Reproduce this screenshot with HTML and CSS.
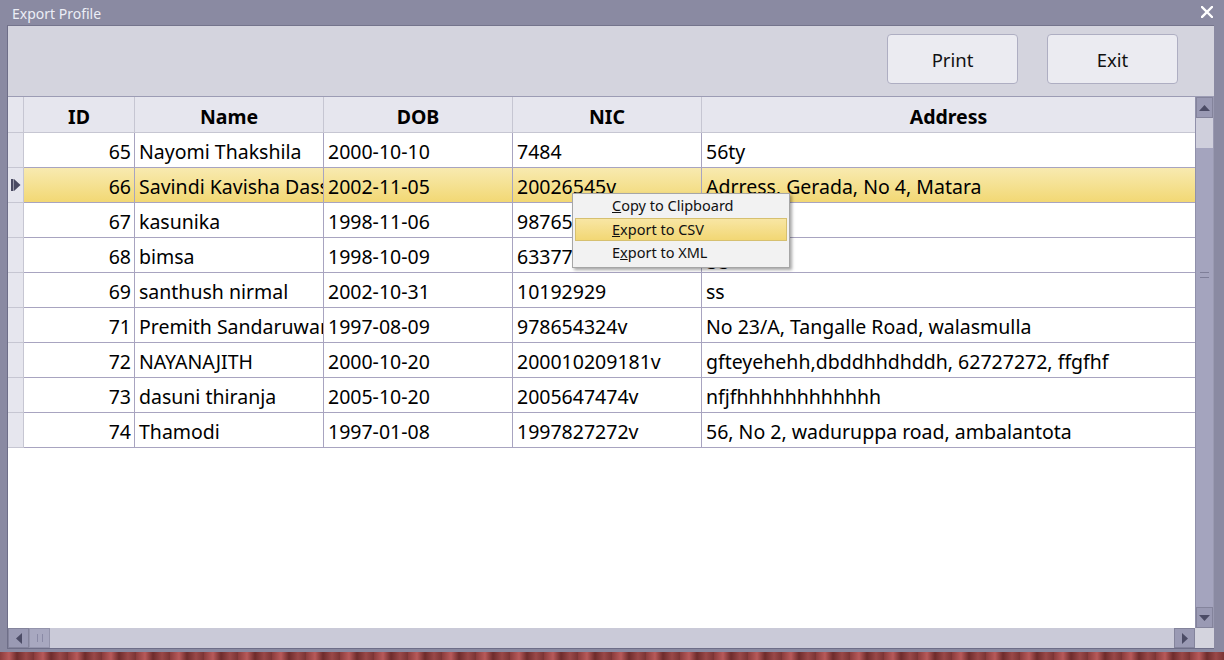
FILE: index.html
```html
<!DOCTYPE html>
<html>
<head>
<meta charset="utf-8">
<title>Export Profile</title>
<link rel="stylesheet" href="styles.css">
</head>
<body>
<div class="window">
  <div class="titlebar">
    <span class="title">Export Profile</span>
    <svg class="close" width="12" height="12" viewBox="0 0 12 12"><path d="M1 1 L11 11 M11 1 L1 11" stroke="#ffffff" stroke-width="2.4" stroke-linecap="square"/></svg>
  </div>
  <div class="frame">
    <div class="toolbar">
      <button class="btn">Print</button>
      <button class="btn">Exit</button>
    </div>
    <div class="gridarea">
      <div class="table">
        <div class="row head">
          <div class="rh"></div>
          <div class="c">ID</div>
          <div class="c">Name</div>
          <div class="c">DOB</div>
          <div class="c">NIC</div>
          <div class="c">Address</div>
        </div>
        <div class="row"><div class="rh"></div><div class="c num">65</div><div class="c">Nayomi Thakshila</div><div class="c">2000-10-10</div><div class="c">7484</div><div class="c">56ty</div></div>
        <div class="row sel"><div class="rh"><svg width="10" height="12" viewBox="0 0 10 12"><rect x="0" y="0" width="2.5" height="12" fill="#4a4a62"/><path d="M3 0 L9.5 6 L3 12 Z" fill="#4a4a62"/></svg></div><div class="c num">66</div><div class="c">Savindi Kavisha Dassanayake</div><div class="c">2002-11-05</div><div class="c">20026545v</div><div class="c">Adrress, Gerada, No 4, Matara</div></div>
        <div class="row"><div class="rh"></div><div class="c num">67</div><div class="c">kasunika</div><div class="c">1998-11-06</div><div class="c">987654321v</div><div class="c">Matara</div></div>
        <div class="row"><div class="rh"></div><div class="c num">68</div><div class="c">bimsa</div><div class="c">1998-10-09</div><div class="c">633776</div><div class="c">gg</div></div>
        <div class="row"><div class="rh"></div><div class="c num">69</div><div class="c">santhush nirmal</div><div class="c">2002-10-31</div><div class="c">10192929</div><div class="c">ss</div></div>
        <div class="row"><div class="rh"></div><div class="c num">71</div><div class="c">Premith Sandaruwan</div><div class="c">1997-08-09</div><div class="c">978654324v</div><div class="c">No 23/A, Tangalle Road, walasmulla</div></div>
        <div class="row"><div class="rh"></div><div class="c num">72</div><div class="c">NAYANAJITH</div><div class="c">2000-10-20</div><div class="c">200010209181v</div><div class="c">gfteyehehh,dbddhhdhddh, 62727272, ffgfhf</div></div>
        <div class="row"><div class="rh"></div><div class="c num">73</div><div class="c">dasuni thiranja</div><div class="c">2005-10-20</div><div class="c">2005647474v</div><div class="c">nfjfhhhhhhhhhhhh</div></div>
        <div class="row"><div class="rh"></div><div class="c num">74</div><div class="c">Thamodi</div><div class="c">1997-01-08</div><div class="c">1997827272v</div><div class="c">56, No 2, waduruppa road, ambalantota</div></div>
        <div class="blank"></div>
      </div>
      <div class="vscroll">
        <div class="sbtn"><svg width="11" height="6" viewBox="0 0 11 6"><path d="M0 6 L5.5 0 L11 6 Z" fill="#4c4c66"/></svg></div>
        <div class="vtrack-light"></div>
        <div class="vthumb"><span class="grip-h"></span></div>
        <div class="sbtn"><svg width="11" height="6" viewBox="0 0 11 6"><path d="M0 0 L5.5 6 L11 0 Z" fill="#4c4c66"/></svg></div>
      </div>
      <div class="hscroll">
        <div class="sbtn hb"><svg width="6" height="11" viewBox="0 0 6 11"><path d="M6 0 L0 5.5 L6 11 Z" fill="#4c4c66"/></svg></div>
        <div class="hthumb"><span class="grip-v"></span></div>
        <div class="htrack"></div>
        <div class="sbtn hb"><svg width="6" height="11" viewBox="0 0 6 11"><path d="M0 0 L6 5.5 L0 11 Z" fill="#4c4c66"/></svg></div>
      </div>
      <div class="corner"></div>
    </div>
  </div>
  <div class="bottomframe"></div>
  <div class="menu">
    <div class="mi"><u>C</u>opy to Clipboard</div>
    <div class="mi hi"><u>E</u>xport to CSV</div>
    <div class="mi">E<u>x</u>port to XML</div>
  </div>
</div>
<div class="desktop"></div>
</body>
</html>
```

FILE: styles.css
```css
html, body {
  margin: 0;
  padding: 0;
}
body {
  width: 1224px;
  height: 660px;
  overflow: hidden;
  background: #7a3434;
  font-family: "Noto Sans", "Open Sans", sans-serif;
}
.window {
  position: relative;
  width: 1224px;
  height: 652px;
  background: #8a8aa2;
  display: flex;
  flex-direction: column;
}
.titlebar {
  height: 25px;
  display: flex;
  align-items: center;
  justify-content: space-between;
  padding: 0 12px 0 12px;
  box-sizing: border-box;
}
.title {
  color: #eceef6;
  font-size: 14px;
  line-height: 25px;
  margin-top: 1px;
}
.close {
  margin-right: -1px;
  margin-top: -2px;
}
.frame {
  margin: 0 10px 0 7px;
  border-left: 1px solid #6e6e88;
  border-top: 1px solid #74748c;
  height: 622px;
  display: flex;
  flex-direction: column;
  background: #d4d4de;
}
.toolbar {
  height: 71px;
  flex: none;
  border-bottom: 1px solid #9c9cb4;
  display: flex;
  justify-content: flex-end;
  align-items: flex-start;
  gap: 29px;
  padding: 8px 36px 0 0;
  box-sizing: border-box;
}
.btn {
  width: 131px;
  height: 50px;
  background: #ebebf1;
  border: 1px solid #aeaec2;
  border-radius: 4px;
  font-family: "Noto Sans", "Open Sans", sans-serif;
  font-size: 18.5px;
  color: #111;
  padding: 0;
}
.gridarea {
  flex: 1;
  display: grid;
  grid-template-columns: 1187px 19px;
  grid-template-rows: 531px 20px;
  background: #ffffff;
}
.table {
  display: flex;
  flex-direction: column;
  background: #fff;
  overflow: hidden;
  min-width: 0;
}
.row {
  display: grid;
  grid-template-columns: 16px 111px 189px 189px 189px 493px;
  height: 35px;
  flex: none;
}
.row .c {
  border-right: 1px solid #a8a4c0;
  border-bottom: 1px solid #a8a4c0;
  font-size: 19.5px;
  line-height: 30px;
  padding: 4px 4px 0 4px;
  white-space: nowrap;
  overflow: hidden;
  color: #000;
  box-sizing: border-box;
}
.row .c:last-child {
  border-right: none;
}
.row .c.num {
  text-align: right;
  padding-right: 3px;
}
.rh {
  background: #e6e6ee;
  border-right: 1px solid #c6c6d2;
  border-bottom: 1px solid #c6c6d2;
  box-sizing: border-box;
  display: flex;
  align-items: center;
  justify-content: center;
}
.head {
  height: 36px;
}
.head .c {
  background: #e6e6ee;
  border-right: 1px solid #c6c6d2;
  border-bottom: 1px solid #c6c6d2;
  font-weight: bold;
  text-align: center;
  line-height: 31px;
  padding-top: 4px;
}
.sel .c {
  background: linear-gradient(#f8eab0, #f2d874);
}
.blank {
  flex: 1;
  background: #fff;
}
.vscroll {
  display: grid;
  grid-template-rows: 21px 30px 1fr 21px;
  background: #a4a4be;
  border-left: 1px solid #9090aa;
  border-right: 1px solid #9a9ab2;
  box-sizing: border-box;
}
.sbtn {
  height: 21px;
  flex: none;
  background: #9a9ab4;
  border: 1px solid #84849c;
  box-sizing: border-box;
  display: flex;
  align-items: center;
  justify-content: center;
}
.vtrack-light {
  background: #cfcfdc;
}
.vthumb {
  background: #a4a4be;
  display: flex;
  justify-content: center;
  align-items: flex-start;
  padding-top: 124px;
  box-sizing: border-box;
}
.grip-h {
  width: 9px;
  height: 4px;
  border-top: 1px solid #7e7e98;
  border-bottom: 1px solid #7e7e98;
}
.hscroll {
  display: flex;
  background: #cacad8;
}
.hb {
  width: 21px;
  height: 20px;
}
.hthumb {
  width: 21px;
  height: 20px;
  background: #a8a8c0;
  border: 1px solid #9494ac;
  box-sizing: border-box;
  display: flex;
  align-items: center;
  justify-content: center;
}
.grip-v {
  width: 4px;
  height: 8px;
  border-left: 1px solid #8a8aa6;
  border-right: 1px solid #8a8aa6;
}
.htrack {
  flex: 1;
  background: #cacad8;
}
.corner {
  background: #d4d4de;
}
.bottomframe {
  height: 4px;
  margin: 0 10px 0 7px;
  border-top: 1px solid #6e6e88;
}
.menu {
  position: absolute;
  left: 572px;
  top: 193px;
  width: 218px;
  height: 75px;
  background: #f2f2f2;
  border: 1px solid #a6a6a6;
  box-sizing: border-box;
  box-shadow: 2px 2px 3px rgba(0, 0, 0, 0.35);
  padding: 0 2px 1px 2px;
  font-size: 14.5px;
}
.mi {
  height: 23px;
  line-height: 21px;
  padding-left: 36px;
  border: 1px solid transparent;
  box-sizing: border-box;
  color: #111;
}
.mi:first-child {
  height: 24px;
}
.mi.hi {
  background: linear-gradient(#f8e6a4, #f2d774);
  border-color: #d6c070;
}
.desktop {
  height: 8px;
  background: repeating-linear-gradient(90deg, #8a3c3c 0px, #b85a5a 9px, #6e2c2c 17px, #9a4848 26px, #7a3434 34px);
}
```
